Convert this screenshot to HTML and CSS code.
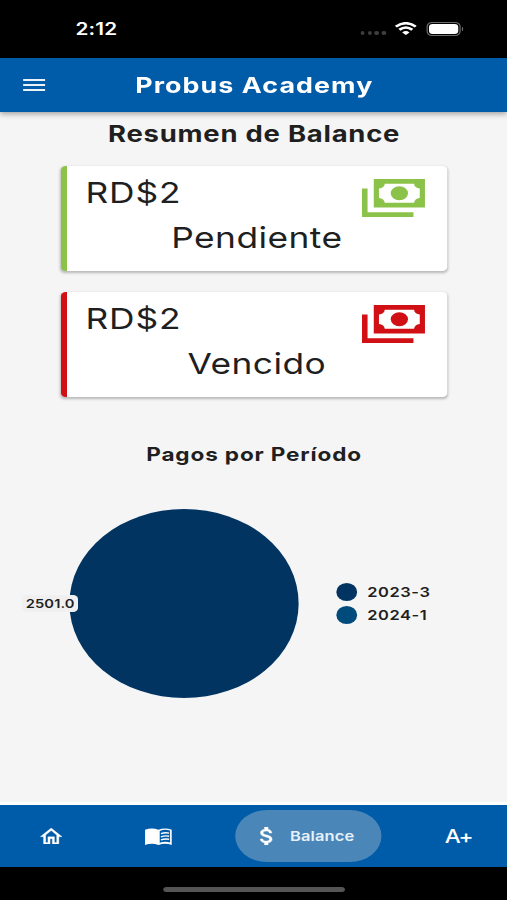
FILE: index.html
```html
<!DOCTYPE html>
<html lang="es">
<head>
<meta charset="utf-8">
<title>Probus Academy</title>
<link rel="stylesheet" href="styles.css">
</head>
<body>
<div class="screen">
  <div class="status">
    <span class="time">2:12</span>
    <div class="signals">
      <span class="dots"><i></i><i></i><i></i><i></i></span>
      <svg class="wifi" viewBox="0 0 18 13" preserveAspectRatio="none" fill="none" stroke="#fff" stroke-width="2.5"><path d="M.8 4.6Q9-2.2 17.2 4.6M3.7 7.8Q9 3.2 14.3 7.8"/><path d="M9 13L6 10.4Q9 7.7 12 10.4Z" fill="#fff" stroke="none"/></svg>
      <span class="battery"><b></b></span><span class="tip"></span>
    </div>
  </div>
  <header class="bar">
    <span class="menu"><i></i><i></i><i></i></span>
    <h1>Probus Academy</h1>
  </header>
  <main>
    <h2>Resumen de Balance</h2>
    <section class="card green">
      <div class="row"><span class="amount">RD$2</span>
        <svg class="cash" viewBox="0 0 63 38" preserveAspectRatio="none" fill="currentColor"><path d="M0 9.5H5.6V33.2H51.5V38H0Z"/><path fill-rule="evenodd" d="M11.8 0H63V28.5H11.8ZM22.8 4.7Q22.3 9 17 9.4V19Q22.3 19.5 22.8 23.8H52.1Q52.6 19.5 57.8 19V9.4Q52.6 9 52.1 4.7Z"/><ellipse cx="37.4" cy="14.3" rx="8.6" ry="7"/></svg>
      </div>
      <div class="label">Pendiente</div>
    </section>
    <section class="card red">
      <div class="row"><span class="amount">RD$2</span>
        <svg class="cash" viewBox="0 0 63 38" preserveAspectRatio="none" fill="currentColor"><path d="M0 9.5H5.6V33.2H51.5V38H0Z"/><path fill-rule="evenodd" d="M11.8 0H63V28.5H11.8ZM22.8 4.7Q22.3 9 17 9.4V19Q22.3 19.5 22.8 23.8H52.1Q52.6 19.5 57.8 19V9.4Q52.6 9 52.1 4.7Z"/><ellipse cx="37.4" cy="14.3" rx="8.6" ry="7"/></svg>
      </div>
      <div class="label">Vencido</div>
    </section>
    <h3>Pagos por Período</h3>
    <div class="chart">
      <div class="pie"><span class="value">2501.0</span></div>
      <ul class="legend">
        <li><i class="a"></i><span>2023-3</span></li>
        <li><i class="b"></i><span>2024-1</span></li>
      </ul>
    </div>
  </main>
  <nav>
    <svg class="home" viewBox="2 3 20 17" preserveAspectRatio="none" fill="#fff" stroke="#fff" stroke-width=".3"><path d="M12 5.69l5 4.5V18h-2v-6H9v6H7v-7.81l5-4.5M12 3L2 12h3v8h6v-6h2v6h6v-8h3L12 3z"/></svg>
    <svg class="book" viewBox="0 0 27 17" preserveAspectRatio="none"><path fill="#fff" d="M0 1.8Q7-1 13.5 1.8Q20-1 27 1.8V17Q20 14.4 13.5 17Q7 14.4 0 17Z"/><path fill="#005ba8" d="M14.8 2.9Q20 .9 25.2 2.6V14.4Q20 13 14.8 14.7Z"/><path fill="none" stroke="#fff" stroke-width="1.4" d="M16 5.7Q20 4.2 24.3 5.1M16 8.8Q20 7.3 24.3 8.2M16 11.9Q20 10.4 24.3 11.3"/></svg>
    <div class="pill">
      <svg class="dollar" viewBox="5.8 3 10.9 18" preserveAspectRatio="none" fill="#fff" stroke="#fff" stroke-width=".4"><path d="M11.8 10.9c-2.27-.59-3-1.2-3-2.15 0-1.09 1.01-1.85 2.7-1.85 1.78 0 2.44.85 2.5 2.1h2.21c-.07-1.72-1.12-3.3-3.21-3.81V3h-3v2.16c-1.94.42-3.5 1.68-3.5 3.61 0 2.31 1.91 3.46 4.7 4.13 2.5.6 3 1.48 3 2.41 0 .69-.49 1.79-2.7 1.79-2.06 0-2.87-.92-2.98-2.1h-2.2c.12 2.19 1.76 3.42 3.68 3.83V21h3v-2.15c1.95-.37 3.5-1.5 3.5-3.55 0-2.84-2.43-3.81-4.7-4.4z"/></svg>
      <span>Balance</span>
    </div>
    <span class="grade">A+</span>
  </nav>
  <div class="foot"><span></span></div>
</div>
</body>
</html>
```
FILE: styles.css
```css
* { box-sizing: border-box; margin: 0; padding: 0; }
html, body { width: 507px; height: 900px; overflow: hidden; background: #000; }
body { font-family: Inter, "Liberation Sans", sans-serif; color: #1f1f1f; }
svg { display: block; flex: none; }
/* 416px wide layout stretched horizontally over the window */
.screen {
  width: 416px; height: 900px; display: flex; flex-direction: column;
  transform: scaleX(1.21875); transform-origin: 0 0;
}
.status {
  height: 57.5px; flex: none; background: #000; color: #fff;
  display: flex; justify-content: space-between; padding: 0 36px 0 62px;
}
.time { font-size: 17px; font-weight: 600; line-height: 20px; margin-top: 19px; letter-spacing: .1px; }
.signals { display: flex; align-items: center; height: 14px; margin-top: 21.5px; }
.dots { display: flex; gap: 2.4px; margin: 9px 7.5px 0 0; }
.dots i { width: 3.5px; height: 4px; border-radius: 50%; background: #3e3e3e; }
.wifi { width: 18px; height: 13px; margin-right: 7.2px; }
.battery { width: 28px; height: 14px; border: 1px solid #6b6b6b; border-radius: 4.5px; padding: 1px; }
.battery b { display: block; height: 100%; background: #fff; border-radius: 3px; }
.tip { width: 1.5px; height: 4px; margin-left: 1px; background: #6b6b6b; border-radius: 0 2px 2px 0; }
.bar {
  height: 54px; flex: none; background: #005ba8; color: #fff; z-index: 1;
  display: flex; align-items: center; padding-left: 19px;
  box-shadow: 0 2px 5px rgba(0,0,0,.35);
}
.menu { width: 17.5px; display: grid; gap: 3px; }
.menu i { height: 2px; background: #fff; opacity: .92; }
h1 { font-size: 22px; font-weight: 700; line-height: 28px; letter-spacing: .88px; margin-left: 74.5px; white-space: nowrap; }
main { flex: 1; background: #f5f5f5; border-bottom: 3px solid #fff; display: flex; flex-direction: column; }
h2 { font-size: 22.5px; font-weight: 700; line-height: 28px; letter-spacing: .62px; text-align: center; margin: 8px 0 0 1px; }
.card {
  width: 317.5px; height: 105.5px; margin: 18px 0 0 49.5px; flex: none;
  border-left: 5px solid; border-radius: 4px; background: #fff;
  box-shadow: 0 1.5px 2.5px rgba(0,0,0,.25); padding: 9px 18px 0 16px;
}
.card + .card { margin-top: 20.5px; }
.green { border-color: #8bc34a; color: #8bc34a; }
.red { border-color: #d01014; color: #d01014; }
.row { display: flex; justify-content: space-between; height: 45px; }
.amount, .label { color: #1f1f1f; font-size: 29px; line-height: 36px; }
.amount { letter-spacing: .7px; margin-left: -.4px; }
.label { text-align: center; letter-spacing: .35px; padding-left: 2px; }
.cash { width: 51.7px; height: 38px; margin: 4.5px 0 0 0; }
h3 { font-size: 18.5px; font-weight: 700; line-height: 24px; letter-spacing: .7px; text-align: center; margin: 45px 0 0 1px; }
.chart { display: flex; align-items: center; margin-top: 43px; padding-left: 56.7px; }
.pie { width: 188.5px; height: 188.5px; border-radius: 50%; background: #023462; position: relative; }
.value {
  position: absolute; left: -38.5px; top: 85.5px; width: 46px; height: 17.5px; border-radius: 4px;
  background: #f0f0f0; font-size: 12px; font-weight: 600; line-height: 17.5px; text-align: center; letter-spacing: .1px;
}
.legend { list-style: none; display: grid; gap: 5px; margin-left: 30.5px; }
.legend li { display: flex; align-items: center; height: 18px; gap: 8px; font-size: 13.5px; font-weight: 600; letter-spacing: .45px; }
.legend i { width: 17.7px; height: 18px; border-radius: 50%; }
.a { background: #023462; }
.b { background: #014b7c; }
nav { height: 62px; flex: none; background: #005ba8; color: #fff; display: flex; align-items: center; padding-left: 32.5px; }
.home { width: 18px; height: 16.5px; }
.book { width: 22px; height: 17px; margin-left: 68.5px; }
.pill { width: 120.5px; height: 52px; margin-left: 51.5px; border-radius: 26px; background: #4a87b8; display: flex; align-items: center; padding-left: 20.5px; }
.dollar { width: 10.5px; height: 18px; }
.pill span { margin-left: 14.5px; font-size: 13.5px; font-weight: 600; letter-spacing: .1px; color: #e8f1f8; }
.grade { margin-left: 52px; font-size: 18.5px; font-weight: 500; letter-spacing: -1.3px; }
.foot { height: 33px; flex: none; background: #000; padding: 20px 0 0 134px; }
.foot span { display: block; width: 149px; height: 5px; border-radius: 3px; background: #555; }
```
